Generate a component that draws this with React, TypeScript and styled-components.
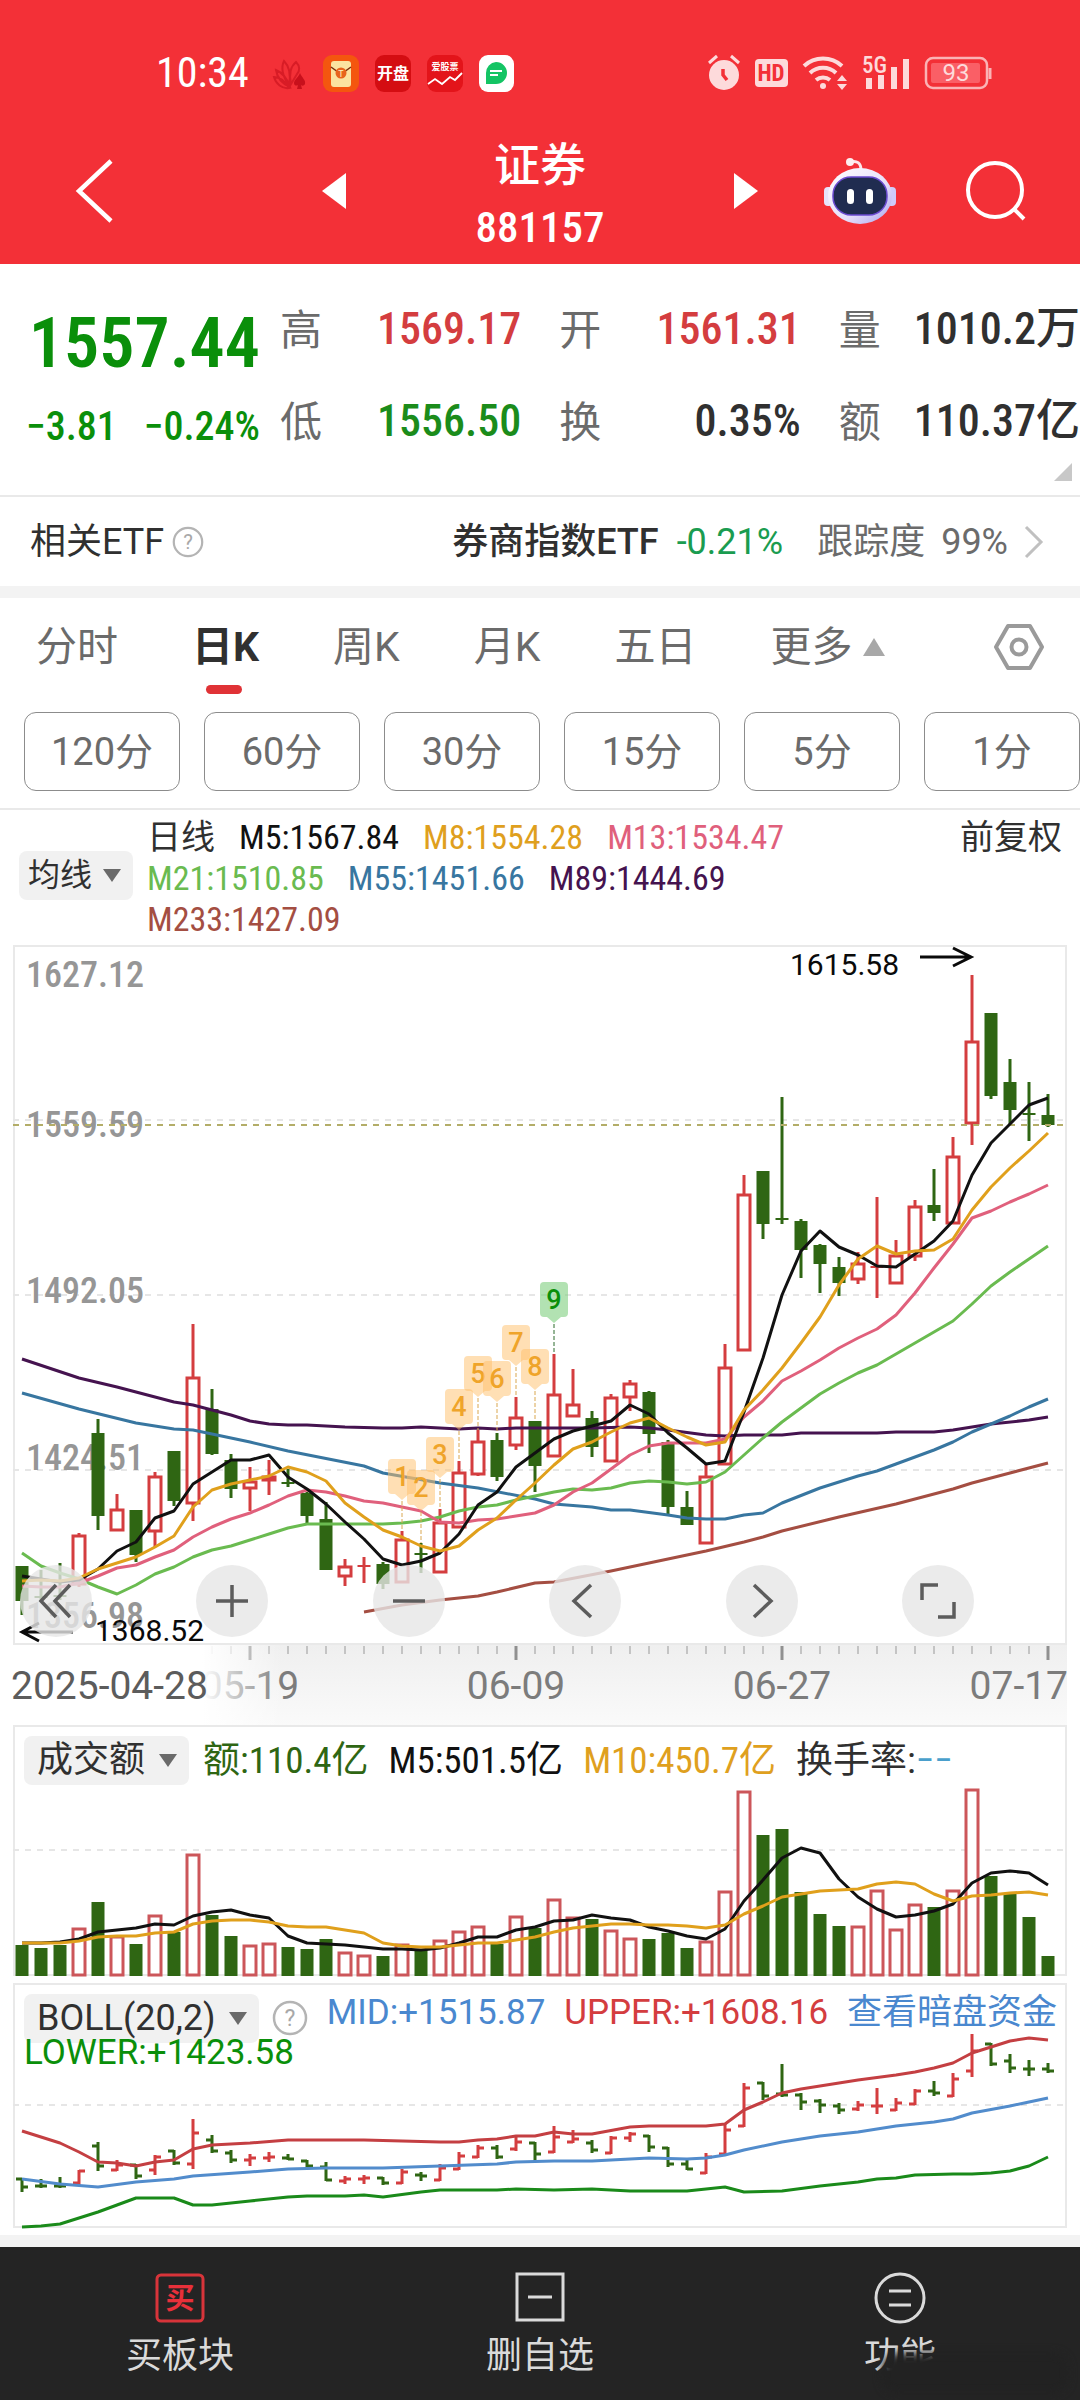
import React from "react";
import styled, { createGlobalStyle } from "styled-components";

const cjk = `"Noto Sans CJK SC", sans-serif`;
const narrow = `"Roboto Condensed", ${cjk}`;
const regular = `Roboto, ${cjk}`;

const colors = {
  brand: "#f33037",
  up: "#d43d3f",
  down: "#2f6613",
  green: "#0a8f0a",
  ink: "#303030",
  muted: "#6b6b6b",
  border: "#e9e9e9",
};

const GlobalStyle = createGlobalStyle`
  *, *::before, *::after { box-sizing: border-box; }
  body { margin: 0; background: #fff; color: ${colors.ink}; font-family: ${regular}; }
  button { padding: 0; border: 0; background: none; color: inherit; font: inherit; }
  svg { display: block; overflow: visible; }
`;

const Page = styled.div`
  display: flex;
  flex-direction: column;
  min-height: 100vh;
  overflow: hidden;
`;

/* ---------- header ---------- */

const Header = styled.header`
  height: 264px;
  background: ${colors.brand};
  color: #fff;
`;

const StatusBar = styled.div`
  display: flex;
  align-items: center;
  justify-content: space-between;
  height: 108px;
  padding: 38px 88px 0 156px;
`;

const StatusGroup = styled.div<{ $tight?: boolean }>`
  display: flex;
  align-items: center;
  gap: ${p => (p.$tight ? 15 : 16)}px;
`;

const Clock = styled.time`
  margin-right: 8px;
  font: 42px/42px ${narrow};
`;

const TitleBar = styled.div`
  display: grid;
  grid-template-columns: 1fr 436px 1fr;
  align-items: center;
  height: 156px;
  padding-top: 10px;
`;

const TitleSide = styled.div<{ $right?: boolean }>`
  display: flex;
  align-items: center;
  justify-content: space-between;
  padding: ${p => (p.$right ? "0 52px 0 66px" : "0 0 0 74px")};
`;

const TitleMiddle = styled.div`
  display: flex;
  align-items: center;
  justify-content: space-between;
`;

const Title = styled.h1`
  margin: 0;
  padding-top: 6px;
  text-align: center;
  font: 500 46px/66px ${cjk};
`;

const Code = styled.span`
  display: block;
  font: 500 43px/66px ${narrow};
`;

/* ---------- quote ---------- */

const Quote = styled.section`
  position: relative;
  display: grid;
  grid-template-columns: 280px 1fr;
  height: 233px;
  padding-top: 19px;
  border-bottom: 2px solid ${colors.border};
`;

const PriceBlock = styled.div`
  display: flex;
  flex-direction: column;
  padding: 20px 20px 0 26px;
  color: ${colors.green};
`;

const Price = styled.strong`
  text-align: right;
  font: 600 70px/80px ${narrow};
`;

const Change = styled.div`
  display: flex;
  justify-content: space-between;
  margin-top: 20px;
  font: 500 40px/48px ${narrow};
`;

const Stats = styled.dl`
  display: grid;
  grid-template-columns: repeat(3, 1fr);
  grid-auto-rows: 92px;
  column-gap: 38px;
  margin: 0;
`;

const Stat = styled.div<{ $color?: string }>`
  display: flex;
  align-items: center;
  justify-content: space-between;
  white-space: nowrap;
  dt { padding-bottom: 4px; font: 42px/60px ${cjk}; color: ${colors.muted}; }
  dd { margin: 0; font: 500 44px/60px ${narrow}; color: ${p => p.$color || colors.ink}; }
`;

const Corner = styled.svg`
  position: absolute;
  right: 8px;
  bottom: 14px;
`;

const Related = styled.section`
  display: flex;
  align-items: center;
  height: 89px;
  padding: 0 36px 0 30px;
  font: 36px/48px ${regular};
`;

const HelpButton = styled.button`
  display: block;
  margin: 0 8px;
`;

const RelatedLink = styled.a`
  display: flex;
  align-items: center;
  margin-left: auto;
  color: ${colors.ink};
  text-decoration: none;
  b { font-weight: 500; }
  em { margin: 0 34px 0 18px; font-style: normal; color: #1a9c50; }
  span { margin-right: 16px; color: ${colors.muted}; }
`;

const Band = styled.div`
  height: 12px;
  background: #f3f3f3;
`;

/* ---------- tabs ---------- */

const Tabs = styled.nav`
  display: flex;
  align-items: center;
  gap: 74px;
  height: 98px;
  padding: 0 36px;
`;

const Tab = styled.button<{ $active?: boolean }>`
  position: relative;
  display: flex;
  align-items: center;
  gap: 10px;
  white-space: nowrap;
  font: ${p => (p.$active ? 700 : 400)} 41px/60px ${regular};
  color: ${p => (p.$active ? colors.ink : colors.muted)};
  &::after {
    content: "";
    display: ${p => (p.$active ? "block" : "none")};
    position: absolute;
    left: 14px;
    bottom: -17px;
    width: 36px;
    height: 9px;
    border-radius: 5px;
    background: #e03236;
  }
`;

const SettingsButton = styled.button`
  margin-left: auto;
`;

const Periods = styled.div`
  display: grid;
  grid-template-columns: repeat(6, 1fr);
  gap: 24px;
  padding: 16px 0 17px 24px;
  border-bottom: 2px solid ${colors.border};
`;

const Period = styled.button`
  height: 79px;
  border: 1px solid #8c8c8c;
  border-radius: 12px;
  font: 38px/60px ${regular};
  color: ${colors.muted};
`;

/* ---------- charts ---------- */

const Averages = styled.div`
  display: flex;
  align-items: flex-start;
  padding: 7px 18px 5px 19px;
  font: 34px/41px ${narrow};
`;

const AverageList = styled.div`
  flex: 1;
  display: flex;
  flex-wrap: wrap;
  column-gap: 24px;
  margin-left: 14px;
  padding-right: 130px;
`;

const Tag = styled.span<{ $color: string }>`
  color: ${p => p.$color};
  white-space: nowrap;
`;

const Picker = styled.label<{ $small?: boolean }>`
  position: relative;
  flex: none;
  margin: ${p => (p.$small ? "34px 0 0" : "0 -6px 0 0")};
  select {
    appearance: none;
    display: block;
    height: 49px;
    padding: ${p => (p.$small ? "0 40px 0 9px" : "0 43px 0 13px")};
    border: 0;
    border-radius: 8px;
    background: #f1f1f1;
    font: ${p => (p.$small ? 32 : 36)}px/49px ${regular};
    color: ${colors.ink};
  }
  svg {
    position: absolute;
    right: 12px;
    top: 18px;
    pointer-events: none;
  }
`;

const Stack = styled.div`
  display: grid;
  margin: 0 13px;
  > * { grid-area: 1 / 1; min-width: 0; }
`;

const Frame = styled.div<{ $gap?: boolean }>`
  display: grid;
  margin: 0 13px 7px;
  border: 2px solid ${colors.border};
  > * { grid-area: 1 / 1; min-width: 0; }
  > svg { margin: -2px; width: calc(100% + 4px); height: auto; }
`;

const Plot = styled.svg`
  width: 100%;
  height: auto;
`;

const Controls = styled.div`
  z-index: 1;
  align-self: end;
  display: flex;
  justify-content: space-between;
  padding: 0 93px 8px 7px;
`;

const RoundButton = styled.button`
  display: grid;
  place-items: center;
  width: 72px;
  height: 72px;
  border-radius: 50%;
  background: rgba(230, 230, 230, 0.8);
  color: #5c5c5c;
`;

const Legend = styled.div`
  z-index: 1;
  align-self: start;
  display: flex;
  align-items: center;
  gap: 20px;
  padding: 9px 10px 0 9px;
  white-space: nowrap;
  font: 37px/48px ${narrow};
`;

const BollLegend = styled.div`
  z-index: 1;
  align-self: start;
  padding: 9px 8px 0 9px;
  font: 35px/38px ${regular};
  white-space: nowrap;
`;

const BollRow = styled.div`
  display: flex;
  align-items: flex-start;
  justify-content: space-between;
`;

const HelpLow = styled(HelpButton)`
  margin: 6px 0 0;
`;

const FundsLink = styled.a`
  color: #4a88cf;
  text-decoration: none;
`;

const Lower = styled.div`
  position: relative;
  margin-top: -9px;
  color: ${colors.green};
`;

/* ---------- bottom bar ---------- */

const BottomBar = styled.nav`
  position: relative;
  flex: 1;
  display: grid;
  grid-template-columns: repeat(3, 1fr);
  min-height: 153px;
  background: #242424;
  color: #dadada;
`;

const NavItem = styled.button`
  display: flex;
  flex-direction: column;
  align-items: center;
  gap: 7px;
  padding-top: 24px;
  font: 36px/48px ${regular};
`;

const Smudge = styled.div`
  position: absolute;
  right: 12px;
  top: 106px;
  width: 186px;
  height: 40px;
  border-radius: 16px;
  background: #222;
  filter: blur(4px);
`;

/* ---------- data ---------- */

type Kind = "R" | "G";
/* direction, high, body top, body bottom, low: offsets from the top of the plot */
const candles: [Kind, number, number, number, number][] = [
  ["G", 621, 621, 656, 670], ["G", 625, 651, 653, 657], ["G", 618, 650, 652, 655], ["R", 588, 590, 640, 642],
  ["G", 474, 488, 571, 585], ["R", 549, 564, 586, 586], ["G", 565, 565, 610, 617], ["R", 527, 531, 587, 602],
  ["G", 506, 506, 556, 561], ["R", 379, 432, 559, 576], ["G", 444, 464, 509, 510], ["G", 509, 515, 544, 553],
  ["R", 522, 536, 544, 566], ["R", 515, 531, 536, 550], ["G", 524, 537, 539, 542], ["G", 547, 548, 571, 578],
  ["G", 557, 574, 625, 625], ["R", 614, 621, 632, 641], ["R", 612, 620, 622, 638], ["G", 617, 619, 639, 644],
  ["R", 586, 594, 638, 638], ["G", 598, 608, 610, 628], ["R", 564, 577, 628, 628], ["R", 516, 527, 583, 583],
  ["R", 485, 496, 530, 531], ["G", 488, 495, 532, 536], ["R", 452, 472, 501, 505], ["G", 476, 476, 521, 547],
  ["R", 409, 449, 512, 512], ["R", 424, 459, 472, 472], ["G", 466, 473, 502, 512], ["R", 449, 452, 517, 517],
  ["R", 435, 438, 453, 466], ["G", 446, 447, 489, 508], ["G", 495, 497, 562, 570], ["G", 546, 562, 580, 580],
  ["R", 518, 531, 599, 599], ["R", 399, 422, 520, 520], ["R", 230, 249, 406, 406], ["G", 226, 226, 279, 294],
  ["G", 152, 273, 275, 279], ["G", 274, 276, 305, 333], ["G", 299, 300, 319, 348], ["G", 312, 322, 338, 351],
  ["R", 307, 318, 335, 339], ["R", 252, 321, 323, 353], ["R", 295, 310, 339, 339], ["R", 255, 261, 312, 316],
  ["G", 224, 260, 268, 276], ["R", 192, 211, 279, 279], ["R", 30, 96, 179, 200], ["G", 68, 68, 151, 154],
  ["G", 114, 137, 165, 181], ["G", 137, 168, 170, 196], ["G", 149, 170, 180, 182],
];

const volumes = [31, 28, 31, 48, 74, 40, 32, 61, 44, 122, 61, 40, 31, 33, 29, 27, 37, 24, 21, 20, 32, 27, 36, 45, 50, 32, 60, 48, 77, 59, 57, 46, 38, 37, 43, 28, 35, 85, 185, 141, 147, 84, 62, 50, 50, 86, 47, 72, 69, 86, 187, 100, 82, 59, 20];

type Line = { color: string; at: (number | [number, number])[] };

const priceLines: Line[] = [
  { color: "#45134f", at: [[0, 414], [3, 433], [5, 442], [6, 447], [8, 457], [9, 460], [10, 465], [11, 470], [12, 476], [13, 479], [14, 480], [15, 480], [17, 482], [19, 483], [20, 483], [21, 482], [23, 484], [24, 483], [25, 484], [26, 483], [30, 483], [32, 482], [33, 483], [34, 485], [36, 490], [37, 491], [38, 490], [40, 490], [41, 488], [45, 488], [46, 487], [48, 487], [49, 485], [51, 479], [53, 475], [54, 472]] },
  { color: "#3876a0", at: [[0, 448], [3, 464], [6, 478], [8, 484], [9, 485], [10, 489], [12, 497], [14, 506], [18, 521], [19, 528], [22, 538], [24, 543], [27, 554], [28, 559], [30, 562], [31, 565], [32, 565], [34, 570], [35, 573], [36, 574], [37, 574], [38, 570], [39, 568], [40, 558], [42, 543], [44, 531], [45, 526], [46, 519], [48, 505], [49, 497], [50, 487], [51, 479], [52, 471], [53, 462], [54, 454]] },
  { color: "#a44e42", at: [[18, 667], [20, 660], [22, 655], [24, 651], [25, 647], [27, 638], [28, 637], [31, 626], [34, 614], [36, 606], [38, 597], [39, 592], [40, 586], [43, 572], [46, 559], [49, 544], [50, 538], [52, 528], [54, 518]] },
  { color: "#6abb50", at: [608, 621, 628, 634, 642, 649, 640, 629, 622, 612, 605, 601, 595, 589, 583, 579, 579, 579, 579, 579, 578, 576, 572, 566, 562, 560, 555, 551, 547, 544, 545, 543, 538, 536, 537, 539, 537, 527, 510, 493, 477, 463, 449, 438, 428, 420, 409, 398, 387, 376, 359, 341, 327, 314, 301] },
  { color: "#e0607c", at: [641, 642, 642, 638, 631, 623, 620, 612, 605, 592, 582, 574, 568, 560, 551, 545, 547, 551, 556, 558, 562, 566, 577, 578, 575, 574, 571, 568, 560, 547, 538, 524, 510, 501, 498, 498, 498, 494, 472, 456, 436, 426, 415, 403, 393, 384, 370, 348, 323, 299, 273, 266, 257, 249, 240] },
  { color: "#111111", at: [631, 634, 637, 635, 624, 606, 597, 573, 566, 539, 527, 515, 515, 510, 532, 544, 559, 577, 594, 614, 620, 616, 608, 589, 560, 547, 522, 508, 494, 486, 481, 476, 460, 469, 488, 503, 519, 516, 467, 413, 350, 306, 286, 302, 310, 321, 322, 309, 296, 276, 230, 198, 179, 160, 153] },
  { color: "#e0a01c", at: [636, 635, 636, 633, 624, 618, 612, 602, 591, 562, 545, 539, 535, 531, 522, 527, 536, 558, 572, 585, 592, 601, 606, 601, 585, 573, 555, 538, 520, 504, 497, 487, 478, 473, 483, 492, 500, 497, 465, 445, 423, 398, 372, 340, 314, 301, 309, 306, 305, 294, 265, 242, 223, 206, 188] },
];

const volumeLines: Line[] = [
  { color: "#111111", at: [218, 218, 217, 214, 207, 205, 203, 199, 200, 191, 187, 185, 190, 193, 211, 218, 219, 220, 222, 224, 224, 225, 223, 218, 212, 212, 205, 202, 196, 195, 190, 193, 195, 202, 206, 211, 214, 204, 176, 155, 133, 123, 128, 154, 172, 184, 192, 190, 186, 179, 158, 148, 146, 148, 160] },
  { color: "#e0a01c", at: [218, 218, 218, 216, 212, 211, 211, 208, 207, 199, 196, 195, 195, 197, 201, 202, 202, 205, 208, 218, 221, 222, 222, 220, 218, 218, 215, 212, 207, 203, 201, 199, 199, 200, 200, 201, 203, 200, 189, 181, 172, 169, 166, 165, 164, 159, 157, 159, 169, 176, 171, 170, 168, 167, 170] },
];

const bollLines: Line[] = [
  { color: "#c43f42", at: [[0, 148], [1, 154], [2, 160], [3, 169], [4, 179], [5, 180], [6, 183], [7, 179], [8, 177], [9, 166], [10, 162], [12, 160], [14, 157], [18, 157], [20, 158], [22, 159], [23, 159], [24, 157], [25, 156], [26, 153], [27, 153], [28, 149], [29, 151], [30, 151], [32, 144], [33, 143], [36, 143], [37, 141], [38, 127], [39, 119], [40, 110], [41, 106], [42, 103], [44, 97], [46, 92], [47, 89], [48, 85], [49, 80], [50, 70], [51, 64], [52, 58], [53, 55], [54, 57]] },
  { color: "#528ccc", at: [[0, 196], [2, 201], [4, 204], [6, 199], [8, 196], [9, 193], [12, 189], [14, 186], [16, 185], [19, 185], [22, 183], [25, 181], [26, 179], [28, 178], [30, 178], [32, 176], [33, 175], [35, 176], [36, 175], [37, 172], [38, 167], [40, 159], [42, 153], [44, 149], [46, 143], [48, 139], [49, 136], [50, 130], [52, 123], [53, 119], [54, 115]] },
  { color: "#1a8a1a", at: [[0, 244], [1, 243], [2, 241], [3, 235], [4, 229], [6, 215], [8, 215], [9, 222], [10, 222], [12, 218], [14, 214], [15, 213], [17, 213], [18, 212], [19, 214], [21, 209], [22, 207], [25, 207], [26, 206], [28, 207], [30, 206], [32, 208], [35, 208], [36, 206], [37, 204], [38, 209], [40, 208], [42, 203], [44, 199], [45, 196], [46, 195], [47, 192], [49, 191], [50, 191], [51, 190], [52, 188], [53, 183], [54, 174]] },
];

/* label, candle index, top of the flag, whether it closes the count */
const flags: [string, number, number, boolean?][] = [
  ["1", 20, 514], ["2", 21, 525], ["3", 22, 492], ["4", 23, 444], ["5", 24, 411], ["6", 25, 416], ["7", 26, 380], ["8", 27, 404], ["9", 28, 337, true],
];

const averages: [string, string][] = [
  ["日线", "#303030"], ["M5:1567.84", "#111"], ["M8:1554.28", "#dfa01e"], ["M13:1534.47", "#e0607c"],
  ["M21:1510.85", "#6abb50"], ["M55:1451.66", "#3876a0"], ["M89:1444.69", "#45134f"], ["M233:1427.09", "#a44e42"],
];

const stats: [string, string, string?][] = [
  ["高", "1569.17", colors.up], ["开", "1561.31", colors.up], ["量", "1010.2万"],
  ["低", "1556.50", "#1b8c1b"], ["换", "0.35%"], ["额", "110.37亿"],
];

const px = (i: number) => 9 + i * 19;
const tone = (k: Kind) => (k === "R" ? colors.up : colors.down);
const bollY = (y: number) => Math.round(52 + (y - 30) * 0.243);

/* ---------- drawings ---------- */

function Lines({ lines }: { lines: Line[] }) {
  return (
    <g fill="none" strokeWidth="3" strokeLinejoin="round">
      {lines.map(l => (
        <polyline
          key={l.color}
          stroke={l.color}
          points={l.at.map((p, i) => (Array.isArray(p) ? `${px(p[0])},${p[1]}` : `${px(i)},${p}`)).join(" ")}
        />
      ))}
    </g>
  );
}

function GridLine({ y, color = "#e6e6e6" }: { y: number; color?: string }) {
  return <line x1="0" x2="1054" y1={y} y2={y} stroke={color} strokeWidth="2" strokeDasharray="6 6" />;
}

function PriceChart() {
  return (
    <Plot viewBox="0 0 1054 700" role="img" aria-label="日K">
      <rect x="1" y="1" width="1052" height="698" fill="none" stroke={colors.border} strokeWidth="2" />
      {[175, 350, 525].map(y => <GridLine key={y} y={y} />)}
      <g fill="#969696" fontFamily={narrow} fontSize="36" fontWeight="500">
        <text x="13" y="42">1627.12</text>
        <text x="13" y="192">1559.59</text>
        <text x="13" y="358">1492.05</text>
        <text x="13" y="525">1424.51</text>
        <text x="13" y="683">1356.98</text>
      </g>
      {candles.map(([k, high, top, bottom, low], i) => (
        <g key={i} stroke={tone(k)} strokeWidth="3">
          <line x1={px(i)} x2={px(i)} y1={high} y2={top} />
          <line x1={px(i)} x2={px(i)} y1={bottom} y2={low} />
          {k === "G" || bottom - top < 4
            ? <rect x={px(i) - 6.5} y={top} width="13" height={bottom - top} fill={tone(k)} stroke="none" />
            : <rect x={px(i) - 6} y={top + 1} width="12" height={Math.max(bottom - top - 2, 3)} fill="#fff" />}
        </g>
      ))}
      <GridLine y={180} color="#b3ad68" />
      <Lines lines={priceLines} />
      {flags.map(([label, i, top, last]) => (
        <g key={label}>
          <line x1={px(i)} x2={px(i)} y1={top + 42} y2={candles[i][1]} stroke={last ? "#2c6a2c" : "#d9a750"} strokeDasharray="4 2" />
          <path
            d={`M${px(i) - 10} ${top}h20q4 0 4 4v27q0 4 -4 4h-3l-7 6l-7 -6h-3q-4 0 -4 -4v-27q0 -4 4 -4z`}
            fill={last ? "#7fcf7f" : "#ffc069"}
            fillOpacity={last ? 0.6 : 0.5}
          />
          <text x={px(i)} y={top + 27} textAnchor="middle" fontFamily={regular} fontSize="27" fontWeight="500" fill={last ? "#0a8f0a" : "#efa42a"}>{label}</text>
        </g>
      ))}
      <g fill="#0a0a0a" fontFamily={regular} fontSize="30">
        <text x="777" y="30">1615.58</text>
        <text x="82" y="696">1368.52</text>
      </g>
      <path d="M907 12h50M940 3l18 9l-18 9M60 687H9M26 678l-17 9l17 9" fill="none" stroke="#0a0a0a" strokeWidth="3" />
    </Plot>
  );
}

function TimeAxis() {
  return (
    <Plot viewBox="0 0 1054 80" role="img" aria-label="2025-04-28 – 07-17">
      <defs>
        <linearGradient id="shade" x1="0" y1="0" x2="0" y2="1">
          <stop offset="0" stopColor="#efefef" />
          <stop offset="1" stopColor="#fafafa" />
        </linearGradient>
        <linearGradient id="fade" x1="0" y1="0" x2="1" y2="0">
          <stop offset="0.7" stopColor="#fff" />
          <stop offset="1" stopColor="#fff" stopOpacity="0" />
        </linearGradient>
      </defs>
      <rect width="1054" height="80" fill="url(#shade)" />
      {candles.slice(10).map((_, n) => {
        const i = n + 10;
        const major = (i - 12) % 14 === 0;
        return <line key={i} x1={px(i)} x2={px(i)} y1="1" y2={major ? 15 : 9} stroke={major ? "#909090" : "#c4c4c4"} strokeWidth={major ? 3 : 2} />;
      })}
      <g fill="#7c7c7c" fontFamily={regular} fontSize="39">
        <text x="237" y="54" textAnchor="middle">05-19</text>
        <text x="503" y="54" textAnchor="middle">06-09</text>
        <text x="769" y="54" textAnchor="middle">06-27</text>
        <text x="1055" y="54" textAnchor="end">07-17</text>
      </g>
      <rect width="270" height="80" fill="url(#fade)" />
      <text x="-2" y="54" fill="#5c5c5c" fontFamily={regular} fontSize="39">2025-04-28</text>
    </Plot>
  );
}

function VolumeChart() {
  return (
    <svg viewBox="0 0 1054 251" role="img" aria-label="成交额">
      <GridLine y={125} />
      {candles.map(([k], i) =>
        k === "G"
          ? <rect key={i} x={px(i) - 6.5} y={251 - volumes[i]} width="13" height={volumes[i]} fill={colors.down} />
          : <rect key={i} x={px(i) - 6} y={252 - volumes[i]} width="12" height={volumes[i] - 2} fill="#fff" stroke="#cc565a" strokeWidth="3" />
      )}
      <Lines lines={volumeLines} />
    </svg>
  );
}

function BollChart() {
  return (
    <svg viewBox="0 0 1054 245" role="img" aria-label="BOLL">
      <GridLine y={122} />
      {candles.map(([k, high, top, bottom, low], i) => {
        const open = bollY(k === "G" ? top : bottom);
        const close = bollY(k === "G" ? bottom : top);
        return <path key={i} d={`M${px(i)} ${bollY(high) - 1}V${bollY(low) + 1}M${px(i) - 6} ${open}h6M${px(i)} ${close}h6`} stroke={tone(k)} strokeWidth="3" fill="none" />;
      })}
      <Lines lines={bollLines} />
    </svg>
  );
}

function Caret() {
  return <svg width="18" height="13"><path d="M0 0h18l-9 13z" fill="#6a6a6a" /></svg>;
}

function HelpIcon({ size }: { size: number }) {
  return (
    <svg width={size} height={size} viewBox="0 0 36 36">
      <circle cx="18" cy="18" r="16" fill="none" stroke="#b4b4b4" strokeWidth="2.5" />
      <text x="18" y="26" textAnchor="middle" fontFamily={regular} fontSize="23" fill="#a8a8a8">?</text>
    </svg>
  );
}

function ControlIcon({ d }: { d: string }) {
  return <svg width="40" height="40" viewBox="0 0 40 40"><path d={d} fill="none" stroke="currentColor" strokeWidth="3.5" /></svg>;
}

const controls: [string, string][] = [
  ["最左", "M20 4L5 20l15 16M34 4L19 20l15 16"],
  ["放大", "M20 4v32M4 20h32"],
  ["缩小", "M4 20h32"],
  ["左移", "M26 4L9 20l17 16"],
  ["右移", "M12 4l17 16l-17 16"],
  ["全屏", "M4 19V4h16M36 21v15H20"],
];

function StatusIcons() {
  return (
    <StatusGroup>
      <svg width="34" height="36" viewBox="0 0 34 36" fill="none" stroke="#d81c26" strokeWidth="2">
        <path d="M17 32C8 28 4 22 3 15c5 2 11 8 14 17zM16 30C9 21 8 12 11 6c5 5 7 14 5 24zM18 29c-2-9-1-17 5-22c4 4 4 9 1 12zM1 22c6 0 11 4 15 11C9 34 3 29 1 22z" />
        <path d="M27 18c2 5 6 7 5 11c-1 2-3 2-4 1l1 4h-5l1-4c-1 1-4 1-4-2c0-3 4-5 6-10z" fill="#c8101c" stroke="none" />
      </svg>
      <svg width="36" height="37" viewBox="0 0 36 37">
        <rect width="36" height="37" rx="9" fill="#f4560f" />
        <rect x="8" y="6" width="20" height="26" rx="3" fill="#fbe3a0" />
        <path d="M8 12l7 5h6l7-5" fill="none" stroke="#7a3010" strokeWidth="1.5" />
        <circle cx="18" cy="18" r="5.500" fill="#e8641c" />
        <text x="18" y="22" textAnchor="middle" fontSize="9" fontFamily={regular} fill="#fff3c0">T</text>
      </svg>
      <svg width="36" height="37" viewBox="0 0 36 37">
        <rect width="36" height="37" rx="9" fill="#d40d12" />
        <text x="18" y="24" textAnchor="middle" fontSize="16" fontWeight="700" fontFamily={cjk} fill="#fff">开盘</text>
      </svg>
      <svg width="36" height="37" viewBox="0 0 36 37">
        <rect width="36" height="37" rx="9" fill="#e3141a" />
        <text x="18" y="15" textAnchor="middle" fontSize="9" fontWeight="700" fontFamily={cjk} fill="#fff">爱股票</text>
        <path d="M1 29l7-5l7 5l8-7l5 3l7-7" fill="none" stroke="#fff" strokeWidth="1.8" />
      </svg>
      <svg width="35" height="37" viewBox="0 0 35 37">
        <rect width="35" height="37" rx="9" fill="#fff" />
        <path d="M17 7a11 11 0 1 1 0 22H7V18a11 11 0 0 1 10-11z" fill="#14c464" />
        <path d="M11 16h12M11 20h8" stroke="#fff" strokeWidth="2" />
      </svg>
    </StatusGroup>
  );
}

function SystemIcons() {
  const pale = "#fddadb";
  return (
    <StatusGroup $tight>
      <svg width="32" height="36" viewBox="0 0 32 36">
        <circle cx="16" cy="20" r="15" fill={pale} />
        <path d="M1 8l8-7M31 8l-8-7" stroke={pale} strokeWidth="3" />
        <path d="M15 14v6l4 5" fill="none" stroke={colors.brand} strokeWidth="3.500" />
      </svg>
      <svg width="33" height="28" viewBox="0 0 33 28">
        <rect width="33" height="28" rx="4" fill={pale} />
        <text x="16" y="22" textAnchor="middle" fontFamily={narrow} fontWeight="700" fontSize="23" fill={colors.brand}>HD</text>
      </svg>
      <svg width="44" height="34" viewBox="0 0 44 34">
        <path d="M1 10a28 28 0 0 1 38 0M7 17a19 19 0 0 1 26 0M13 24a11 11 0 0 1 14 0" fill="none" stroke={pale} strokeWidth="4" />
        <circle cx="20" cy="30" r="3" fill={pale} />
        <path d="M34 25l5-6l5 6zM34 28h10l-5 6z" fill={pale} />
      </svg>
      <svg width="48" height="34" viewBox="0 0 48 34">
        <text x="0" y="17" fontFamily={narrow} fontWeight="500" fontSize="23" fill={pale}>5G</text>
        <path d="M4 22h6v11H4zM16 19h6v14h-6zM29 11h6v22h-6zM41 3h6v30h-6z" fill={pale} />
      </svg>
      <svg width="67" height="32" viewBox="0 0 67 32">
        <rect x="1" y="1" width="61" height="30" rx="7" fill="none" stroke="#fbb3b5" strokeWidth="2.500" />
        <rect x="6" y="6" width="49" height="20" rx="2" fill="#fa5f66" />
        <path d="M65 11v11" stroke="#fbb3b5" strokeWidth="3" />
        <text x="31" y="24" textAnchor="middle" fontFamily={regular} fontSize="24" fill={pale}>93</text>
      </svg>
    </StatusGroup>
  );
}

function Robot() {
  return (
    <svg width="72" height="66" viewBox="0 0 72 66">
      <defs>
        <linearGradient id="shell" x1="0" y1="0" x2="1" y2="1">
          <stop offset="0" stopColor="#fff" />
          <stop offset="0.6" stopColor="#e6defa" />
          <stop offset="1" stopColor="#a9a4ee" />
        </linearGradient>
      </defs>
      <path d="M26 4c7-2 11 1 11 8" fill="none" stroke="#fce6ea" strokeWidth="3" />
      <circle cx="26" cy="4" r="4" fill="#fdeef0" />
      <rect x="0" y="29" width="9" height="19" rx="4" fill="#e7e3fb" />
      <rect x="63" y="29" width="9" height="19" rx="4" fill="#cfcbfa" />
      <ellipse cx="36" cy="38" rx="32" ry="28" fill="url(#shell)" />
      <rect x="9" y="19" width="54" height="38" rx="18" fill="#202c50" stroke="#6a4ad0" strokeWidth="1.5" />
      <rect x="23" y="31" width="7" height="15" rx="3.500" fill="#fff" />
      <rect x="42" y="31" width="7" height="15" rx="3.500" fill="#fff" />
    </svg>
  );
}

/* ---------- page ---------- */

export default function App() {
  return (
    <Page>
      <GlobalStyle />
      <Header>
        <StatusBar>
          <StatusGroup>
            <Clock>10:34</Clock>
            <StatusIcons />
          </StatusGroup>
          <SystemIcons />
        </StatusBar>
        <TitleBar>
          <TitleSide>
            <button aria-label="返回">
              <svg width="40" height="66" viewBox="0 0 40 66"><path d="M37 3L5 33l32 30" fill="none" stroke="#fff" strokeWidth="4.500" /></svg>
            </button>
          </TitleSide>
          <TitleMiddle>
            <button aria-label="上一个"><svg width="24" height="36"><path d="M24 0v36L0 18z" fill="#fff" /></svg></button>
            <Title>证券<Code>881157</Code></Title>
            <button aria-label="下一个"><svg width="24" height="36"><path d="M0 0v36l24-18z" fill="#fff" /></svg></button>
          </TitleMiddle>
          <TitleSide $right>
            <button aria-label="助手"><Robot /></button>
            <button aria-label="搜索">
              <svg width="64" height="64" viewBox="0 0 64 64">
                <circle cx="31" cy="31" r="27" fill="none" stroke="#fff" strokeWidth="4" />
                <path d="M50 50l10 10" stroke="#fff" strokeWidth="4" />
              </svg>
            </button>
          </TitleSide>
        </TitleBar>
      </Header>

      <Quote>
        <PriceBlock>
          <Price>1557.44</Price>
          <Change><span>−3.81</span><span>−0.24%</span></Change>
        </PriceBlock>
        <Stats>
          {stats.map(([label, value, color]) => (
            <Stat key={label} $color={color}><dt>{label}</dt><dd>{value}</dd></Stat>
          ))}
        </Stats>
        <Corner width="18" height="18"><path d="M18 0v18H0z" fill="#c8c8c8" /></Corner>
      </Quote>

      <Related>
        相关ETF
        <HelpButton aria-label="说明"><HelpIcon size={32} /></HelpButton>
        <RelatedLink href="#etf">
          <b>券商指数ETF</b><em>-0.21%</em><span>跟踪度</span><span>99%</span>
          <svg width="20" height="34"><path d="M2 2l15 15L2 32" fill="none" stroke="#c0c0c0" strokeWidth="3" /></svg>
        </RelatedLink>
      </Related>
      <Band />

      <Tabs>
        <Tab>分时</Tab>
        <Tab $active>日K</Tab>
        <Tab>周K</Tab>
        <Tab>月K</Tab>
        <Tab>五日</Tab>
        <Tab>更多<svg width="22" height="18"><path d="M11 0l11 18H0z" fill="#a8a8a8" /></svg></Tab>
        <SettingsButton aria-label="设置">
          <svg width="50" height="48" viewBox="0 0 50 48" fill="none" stroke="#9a9a9a" strokeWidth="4">
            <path d="M14 3h22l12 21l-12 21H14L2 24z" strokeLinejoin="round" />
            <circle cx="25" cy="24" r="7.500" />
          </svg>
        </SettingsButton>
      </Tabs>
      <Periods>
        {["120分", "60分", "30分", "15分", "5分", "1分"].map(t => <Period key={t}>{t}</Period>)}
      </Periods>

      <Averages>
        <Picker $small>
          <select aria-label="主图指标"><option>均线</option></select>
          <Caret />
        </Picker>
        <AverageList>
          {averages.map(([t, c]) => <Tag key={t} $color={c}>{t}</Tag>)}
        </AverageList>
        <Tag $color={colors.ink}>前复权</Tag>
      </Averages>

      <Stack>
        <PriceChart />
        <Controls>
          {controls.map(([name, d]) => (
            <RoundButton key={name} aria-label={name}><ControlIcon d={d} /></RoundButton>
          ))}
        </Controls>
      </Stack>
      <Stack><TimeAxis /></Stack>

      <Frame>
        <VolumeChart />
        <Legend>
          <Picker>
            <select aria-label="副图指标一"><option>成交额</option></select>
            <Caret />
          </Picker>
          <Tag $color={colors.down}>额:110.4亿</Tag>
          <Tag $color="#111">M5:501.5亿</Tag>
          <Tag $color="#dfa01e">M10:450.7亿</Tag>
          <Tag $color={colors.ink}>换手率:<Tag $color="#4a9fcc">−−</Tag></Tag>
        </Legend>
      </Frame>

      <Frame>
        <BollChart />
        <BollLegend>
          <BollRow>
            <Picker>
              <select aria-label="副图指标二"><option>BOLL(20,2)</option></select>
              <Caret />
            </Picker>
            <HelpLow aria-label="说明"><HelpIcon size={36} /></HelpLow>
            <Tag $color="#4a88cf">MID:+1515.87</Tag>
            <Tag $color={colors.up}>UPPER:+1608.16</Tag>
            <FundsLink href="#funds">查看暗盘资金</FundsLink>
          </BollRow>
          <Lower>LOWER:+1423.58</Lower>
        </BollLegend>
      </Frame>

      <Band />
      <BottomBar>
        <NavItem>
          <svg width="54" height="54" viewBox="0 0 54 54">
            <rect x="4" y="4" width="46" height="46" rx="4" fill="none" stroke="#d8343a" strokeWidth="3" />
            <text x="27" y="38" textAnchor="middle" fontFamily={cjk} fontSize="29" fontWeight="700" fill="#e8303a">买</text>
          </svg>
          买板块
        </NavItem>
        <NavItem>
          <svg width="54" height="54" viewBox="0 0 54 54" fill="none" stroke="#dadada" strokeWidth="3">
            <path d="M4 3h46v46H4zM15 26h24" />
          </svg>
          删自选
        </NavItem>
        <NavItem>
          <svg width="54" height="54" viewBox="0 0 54 54" fill="none" stroke="#dadada" strokeWidth="3">
            <circle cx="27" cy="27" r="24" />
            <path d="M16 20h22M16 34h22" />
          </svg>
          功能
        </NavItem>
        <Smudge />
      </BottomBar>
    </Page>
  );
}
